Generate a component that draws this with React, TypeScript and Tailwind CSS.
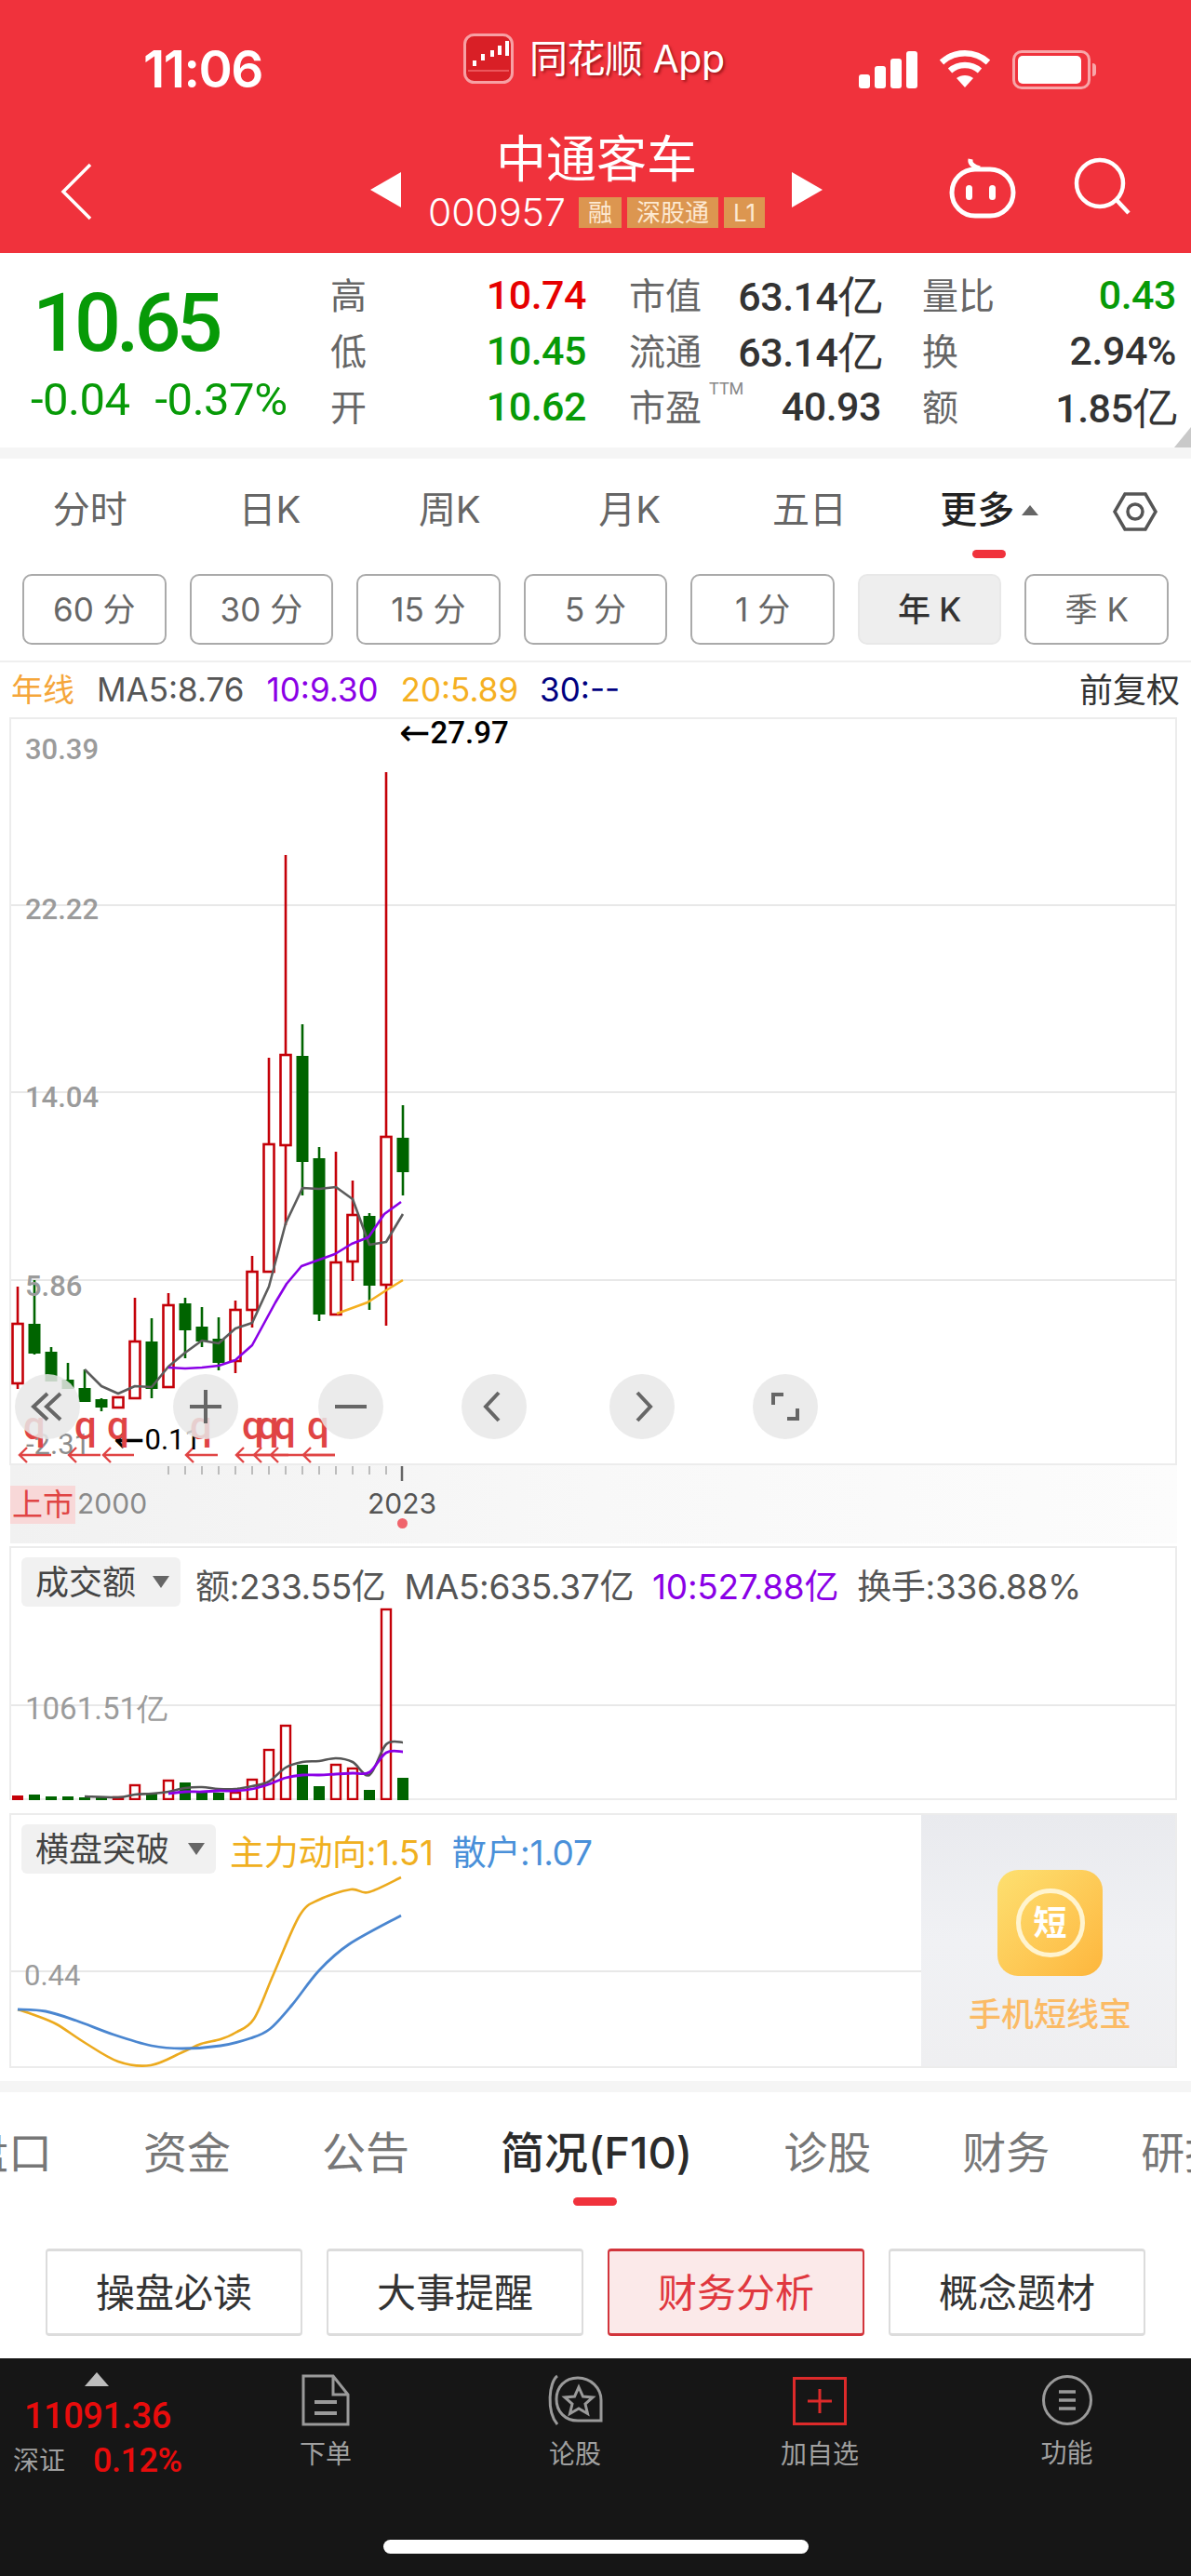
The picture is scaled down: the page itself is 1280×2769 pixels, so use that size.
import React from "react";

// x = 19 + 18 * i, all y values are page coordinates
const CANDLES: [string, number, number, number, number][] = [
  ["r", 1383, 1423, 1487, 1493],
  ["g", 1376, 1423, 1455, 1456],
  ["g", 1448, 1453, 1485, 1485],
  ["g", 1465, 1483, 1493, 1493],
  ["g", 1472, 1492, 1507, 1507],
  ["g", 1503, 1504, 1513, 1517],
  ["r", 1502, 1502, 1513, 1513],
  ["r", 1395, 1442, 1503, 1503],
  ["g", 1417, 1442, 1493, 1503],
  ["r", 1390, 1403, 1491, 1491],
  ["g", 1395, 1401, 1430, 1460],
  ["g", 1405, 1426, 1442, 1448],
  ["g", 1416, 1439, 1465, 1473],
  ["r", 1398, 1408, 1463, 1476],
  ["r", 1350, 1367, 1408, 1427],
  ["r", 1137, 1230, 1367, 1367],
  ["r", 919, 1134, 1231, 1317],
  ["g", 1101, 1135, 1249, 1285],
  ["g", 1233, 1245, 1413, 1420],
  ["r", 1238, 1357, 1413, 1413],
  ["r", 1269, 1306, 1356, 1377],
  ["g", 1304, 1307, 1382, 1408],
  ["r", 830, 1222, 1381, 1425],
  ["g", 1188, 1223, 1260, 1285],
];

const MA5 = "91,1472 109,1490 127,1498 145,1490 163,1491 181,1469 199,1454 217,1441 235,1444 253,1428 271,1422 289,1383 307,1315 325,1277 343,1278 361,1276 379,1289 397,1338 415,1335 433,1305";
const MA10 = "181,1470 199,1471 217,1470 235,1468 253,1462 271,1446 296,1400 308,1380 324,1361 360,1348 378,1337 396,1330 413,1305 431,1292";
const MA20 = "362,1412 395,1400 415,1387 433,1376";

const VOLS = [1930, 1929, 1931, 1931, 1932, 1932, 1932, 1919, 1928, 1914, 1916, 1927, 1927, 1927, 1913, 1881, 1855, 1897, 1920, 1897, 1901, 1924, 1730, 1911];
const VOL_MA5 = "91,1931 127,1932 145,1929 163,1928 181,1926 199,1922 217,1921 235,1923 253,1923 271,1920 289,1915 307,1900 325,1894 343,1893 361,1890 379,1894 397,1908 415,1875 433,1873";
const VOL_MA10 = "181,1928 199,1926 217,1926 235,1925 253,1925 271,1923 289,1918 307,1911 325,1908 343,1908 361,1907 379,1906 397,1905 415,1884 433,1883";

const ZLDX = "19,2160 37,2166 61,2176 90,2195 127,2216 162,2220 196,2206 216,2197 237,2192 253,2185 273,2170 294,2122 322,2059 343,2042 377,2031 396,2034 431,2018";
const SH = "19,2160 49,2162 82,2172 122,2187 163,2199 196,2202 237,2199 269,2191 290,2181 314,2155 343,2118 375,2090 431,2059";

const Q_X = [37, 92, 127, 216, 272, 288, 306, 342];
const ARROWS: [number, number][] = [[20, 55], [73, 108], [110, 144], [199, 234], [253, 360], [272, 290], [290, 310], [325, 360]];

const TABS = ["分时", "日K", "周K", "月K", "五日"];
const PERIODS = ["60 分", "30 分", "15 分", "5 分", "1 分", "年 K", "季 K"];
const LOWER_TABS = ["盘口", "资金", "公告", "简况(F10)", "诊股", "财务", "研报"];
const SHORTCUTS = ["操盘必读", "大事提醒", "财务分析", "概念题材"];

// catmull-rom through the sampled points, the indicator curves are smooth
function smooth(points: string) {
  const p = points.split(" ").map((s) => s.split(",").map(Number));
  let d = `M${p[0][0]} ${p[0][1]}`;
  for (let i = 0; i < p.length - 1; i++) {
    const a = p[Math.max(i - 1, 0)];
    const b = p[i];
    const c = p[i + 1];
    const e = p[Math.min(i + 2, p.length - 1)];
    d += `C${b[0] + (c[0] - a[0]) / 6} ${b[1] + (c[1] - a[1]) / 6} ${c[0] - (e[0] - b[0]) / 6} ${c[1] - (e[1] - b[1]) / 6} ${c[0]} ${c[1]}`;
  }
  return d;
}

function StatColumn({ rows, width }: { rows: [string, string, string][]; width: string }) {
  return (
    <div className={`flex flex-col ${width}`}>
      {rows.map(([label, value, color]) => (
        <div key={label} className="flex h-[60px] items-center justify-between">
          <span className="relative text-[39px] leading-none text-[#666]">
            {label}
            {label === "市盈" && (
              <span className="absolute left-[86px] top-[-9px] font-['Roboto'] text-[18px] text-[#888]">TTM</span>
            )}
          </span>
          <span className={`font-['Roboto'] text-[43px] font-medium tracking-[-0.5px] leading-none ${color}`}>
            {value.endsWith("亿") ? (
              <>
                {value.slice(0, -1)}
                <span className="text-[47px]">亿</span>
              </>
            ) : (
              value
            )}
          </span>
        </div>
      ))}
    </div>
  );
}

function Dropdown({ label, width }: { label: string; width: string }) {
  return (
    <div className={`flex h-[53px] items-center justify-between rounded-md bg-[#f1f1f1] pl-[15px] pr-3 text-[36px] text-[#444] ${width}`}>
      <span>{label}</span>
      <span className="h-0 w-0 border-x-[9px] border-t-[13px] border-x-transparent border-t-[#666]" />
    </div>
  );
}

function RoundButton({ left, children }: { left: string; children: React.ReactNode }) {
  return (
    <div className={`absolute top-[706px] flex h-[70px] w-[70px] items-center justify-center rounded-full bg-[#e8e8e8]/85 ${left}`}>
      <svg width="40" height="40" viewBox="0 0 40 40" fill="none" stroke="#666" strokeWidth="4">
        {children}
      </svg>
    </div>
  );
}

function NavLabel({ children }: { children: React.ReactNode }) {
  return <span className="mt-[16px] text-[28px] leading-none text-[#a0a0a0]">{children}</span>;
}

export default function App() {
  return (
    <div className="h-[2769px] w-[1280px] overflow-hidden bg-white font-['Inter','Noto_Sans_CJK_SC',sans-serif]">
      {/* red header */}
      <div className="h-[272px] bg-[#f0323c] text-white">
        <div className="flex h-[145px] items-start">
          <span className="ml-[154px] mt-[47px] w-[135px] font-['Inter'] text-[55px] font-semibold leading-none tracking-[-1.5px]">11:06</span>
          <div className="ml-[209px] mt-[36px] flex items-center gap-[17px]">
            <svg width="54" height="54" viewBox="0 0 54 54">
              <rect x="1.5" y="1.5" width="51" height="51" rx="10" fill="#d91f26" stroke="#f7a0a4" strokeWidth="3" />
              <path d="M5 40h44" stroke="#f26a6e" strokeWidth="1.5" />
              <path d="M10 29h4v6h-4zM19 22h4v7h-4zM29 18h4v7h-4zM37 13h4v10h-4zM45 8h4v16h-4z" fill="#fff" />
            </svg>
            <span className="w-[212px] whitespace-nowrap text-[41px] leading-none tracking-[-0.5px] [text-shadow:2px_2px_3px_rgba(90,0,0,0.55)]">同花顺 App</span>
          </div>
          <div className="ml-[142px] mt-[55px] flex items-end gap-[5px]">
            {["h-[15px]", "h-[24px]", "h-[32px]", "h-[40px]"].map((h) => (
              <span key={h} className={`w-[12px] rounded-[3px] bg-white ${h}`} />
            ))}
          </div>
          <svg className="ml-[22px] mt-[53px]" width="58" height="42" viewBox="0 0 58 42" fill="none" stroke="#fff" strokeWidth="6.5">
            <path d="M4 14C18 1 40 1 54 14" />
            <path d="M13 23C22 15 36 15 45 23" />
            <path d="M29 41L20 31C25 27 33 27 38 31Z" fill="#fff" stroke="none" />
          </svg>
          <div className="ml-[22px] mt-[54px] flex items-center">
            <div className="flex h-[42px] w-[84px] items-center rounded-[10px] border-[3px] border-[#f8a6a9] p-[3px]">
              <div className="h-full w-[68px] rounded-[5px] bg-white" />
            </div>
            <div className="ml-[2px] h-[14px] w-[4px] rounded-r-full bg-[#f8a6a9]" />
          </div>
        </div>
        <div className="grid h-[127px] grid-cols-[398px_486px_1fr]">
          <div className="pl-[64px] pt-[30px]">
            <svg width="36" height="62" viewBox="0 0 36 62" fill="none" stroke="#fff" strokeWidth="3.5">
              <path d="M33 2L4 31l29 29" />
            </svg>
          </div>
          <div className="flex items-start justify-between">
            <span className="mt-[40px] h-0 w-0 border-y-[19px] border-r-[33px] border-y-transparent border-r-white" />
            <div className="flex flex-col items-center">
              <span className="text-[54px] leading-none">中通客车</span>
              <div className="mt-[9px] flex items-center">
                <span className="mr-[14px] text-[41px] font-light leading-none">000957</span>
                {["融", "深股通", "L1"].map((b) => (
                  <span key={b} className="mr-[6px] flex h-[33px] items-center bg-[#dc9650] px-[10px] text-[26px] leading-none text-[#fde9d2] last:mr-0">
                    {b}
                  </span>
                ))}
              </div>
            </div>
            <span className="mt-[40px] h-0 w-0 border-y-[19px] border-l-[33px] border-y-transparent border-l-white" />
          </div>
          <div className="flex items-start justify-end gap-[62px] pr-[64px] pt-[24px]">
            <svg width="72" height="66" viewBox="0 0 72 66" fill="none" stroke="#fff" strokeWidth="5">
              <path d="M23 2c-1 5 3 8 10 10" />
              <rect x="3" y="13" width="66" height="50" rx="25" />
              <rect x="18" y="30" width="7" height="16" rx="3.5" fill="#fff" stroke="none" />
              <rect x="43" y="30" width="7" height="16" rx="3.5" fill="#fff" stroke="none" />
            </svg>
            <svg width="62" height="62" viewBox="0 0 62 62" fill="none" stroke="#fff" strokeWidth="4.5">
              <circle cx="28" cy="28" r="25" />
              <path d="M46 46l13 14" />
            </svg>
          </div>
        </div>
      </div>

      {/* quote summary */}
      <div className="relative flex h-[209px] bg-white pt-[15px]">
        <div className="flex w-[355px] flex-col pl-[33px]">
          <span className="mt-[16px] ml-[2px] font-['Roboto'] text-[88px] font-medium leading-none tracking-[-5px] text-[#079a07]">10.65</span>
          <div className="mt-[14px] flex gap-[27px] whitespace-nowrap font-['Roboto'] text-[49px] leading-none tracking-[-0.5px] text-[#079a07]">
            <span>-0.04</span>
            <span>-0.37%</span>
          </div>
        </div>
        <StatColumn
          width="w-[275px]"
          rows={[
            ["高", "10.74", "text-[#e60000]"],
            ["低", "10.45", "text-[#079a07]"],
            ["开", "10.62", "text-[#079a07]"],
          ]}
        />
        <div className="w-[46px]" />
        <StatColumn
          width="w-[271px]"
          rows={[
            ["市值", "63.14亿", "text-[#333]"],
            ["流通", "63.14亿", "text-[#333]"],
            ["市盈", "40.93", "text-[#333]"],
          ]}
        />
        <div className="w-[44px]" />
        <StatColumn
          width="w-[273px]"
          rows={[
            ["量比", "0.43", "text-[#079a07]"],
            ["换", "2.94%", "text-[#333]"],
            ["额", "1.85亿", "text-[#333]"],
          ]}
        />
        <span className="absolute bottom-0 right-0 h-0 w-0 border-b-[22px] border-l-[18px] border-b-[#c9c9c9] border-l-transparent" />
      </div>
      <div className="h-[12px] bg-[#f5f5f5]" />

      {/* period tabs */}
      <div className="flex h-[124px] items-start pt-[35px]">
        <div className="grid w-[1160px] grid-cols-6">
          {TABS.map((t) => (
            <span key={t} className="text-center text-[40px] leading-[40px] text-[#666]">
              {t}
            </span>
          ))}
          <div className="relative flex items-center justify-center gap-[8px]">
            <span className="text-[40px] font-medium leading-[40px] text-[#222]">更多</span>
            <span className="h-0 w-0 border-x-[9px] border-b-[11px] border-x-transparent border-b-[#666]" />
            <span className="absolute left-[78px] top-[63px] h-[9px] w-[36px] rounded-full bg-[#f0323c]" />
          </div>
        </div>
        <svg className="ml-[35px]" width="50" height="44" viewBox="0 0 50 44" fill="none" stroke="#555" strokeWidth="3.5">
          <path d="M14 3h22l11 19-11 19H14L3 22z" />
          <circle cx="25" cy="22" r="8" />
        </svg>
      </div>
      <div className="flex h-[76px] gap-[25px] px-[24px]">
        {PERIODS.map((p) => (
          <div
            key={p}
            className={`flex w-[155px] items-center justify-center rounded-[10px] border-2 text-[35px] ${p === "年 K" ? "border-[#e8e8e8] bg-[#eeeeee] font-medium text-[#333]" : "border-[#aaa] text-[#666]"}`}
          >
            {p}
          </div>
        ))}
      </div>
      <div className="mt-[17px] h-[2px] bg-[#efefef]" />

      {/* MA legend */}
      <div className="flex h-[59px] items-center px-[12px] text-[35px] leading-none">
        <span className="text-[34px] text-[#f5a63a]">年线</span>
        <span className="ml-[24px] text-[#555]">MA5:8.76</span>
        <span className="ml-[24px] text-[#8a00e6]">10:9.30</span>
        <span className="ml-[24px] text-[#f5b021]">20:5.89</span>
        <span className="ml-[23px] text-[#000080]">30:--</span>
        <span className="ml-auto text-[36px] text-[#333]">前复权</span>
      </div>

      {/* K line chart */}
      <div className="relative ml-[10px] h-[804px] w-[1255px] overflow-hidden outline-2 -outline-offset-2 outline-[#ececec]">
        <svg className="absolute inset-0" width="1255" height="804" viewBox="10 771 1255 804" fill="none">
          {[973, 1174, 1376].map((y) => (
            <path key={y} d={`M12 ${y}H1264`} stroke="#e8e8e8" strokeWidth="2" />
          ))}
          {CANDLES.map(([kind, hi, top, bottom, lo], i) => {
            const x = 19 + 18 * i;
            const color = kind === "r" ? "#c40008" : "#006400";
            return (
              <g key={i}>
                <path d={`M${x} ${hi}V${lo}`} stroke={color} strokeWidth="2.6" />
                {kind === "r" ? (
                  <rect x={x - 5.5} y={top} width="11" height={bottom - top} fill="#fff" stroke={color} strokeWidth="2.6" />
                ) : (
                  <rect x={x - 6.5} y={top} width="13" height={bottom - top} fill={color} />
                )}
              </g>
            );
          })}
          <polyline points={MA5} stroke="#5c5c5c" strokeWidth="2.6" strokeLinejoin="round" />
          <polyline points={MA10} stroke="#8a00e6" strokeWidth="2.6" strokeLinejoin="round" />
          <polyline points={MA20} stroke="#f5b021" strokeWidth="2.6" strokeLinejoin="round" />
          {ARROWS.map(([a, b]) => (
            <path key={a} d={`M${b} 1564H${a + 1}M${a + 9} 1556l-8 8 8 8`} stroke="#e04444" strokeWidth="2.4" />
          ))}
        </svg>

        {[
          ["30.39", "top-[19px]"],
          ["22.22", "top-[191px]"],
          ["14.04", "top-[393px]"],
          ["5.86", "top-[596px]"],
        ].map(([v, top]) => (
          <span key={v} className={`absolute left-[17px] font-['Roboto'] text-[31px] font-medium leading-[31px] text-[#9b9b9b] ${top}`}>
            {v}
          </span>
        ))}
        <span className="absolute left-[419px] top-0 flex items-center font-['Roboto'] text-[33px] font-medium leading-[33px] text-black">
          <span className="font-['DejaVu_Sans'] text-[40px] font-normal leading-[33px]">←</span>27.97
        </span>
        <span className="absolute left-[18px] top-[766px] font-['Roboto'] text-[31px] leading-[31px] text-[#8c8c8c]">-2.31</span>
        <span className="absolute left-[112px] top-[761px] flex items-center font-['Roboto'] text-[31px] leading-[31px] text-black">
          <span className="font-['DejaVu_Sans'] text-[40px] leading-[31px]">←</span>0.11
        </span>
        {Q_X.map((x, i) => (
          <span
            key={i}
            className="absolute top-[741px] font-['Roboto'] text-[42px] font-medium leading-[42px] text-[#e04444]"
            style={{ left: x - 22 }}
          >
            q
          </span>
        ))}

        <RoundButton left="left-[6px]">
          <path d="M20 6L5 20l15 14M34 6L19 20l15 14" />
        </RoundButton>
        <RoundButton left="left-[176px]">
          <path d="M20 2v36M3 20h34" />
        </RoundButton>
        <RoundButton left="left-[332px]">
          <path d="M3 20h34" />
        </RoundButton>
        <RoundButton left="left-[486px]">
          <path d="M25 5L11 20l14 15" />
        </RoundButton>
        <RoundButton left="left-[645px]">
          <path d="M15 5l14 15-14 15" />
        </RoundButton>
        <RoundButton left="left-[799px]">
          <path d="M7 18V7h11M33 22v11H22" />
        </RoundButton>
      </div>

      {/* time axis */}
      <div className="relative ml-[11px] h-[84px] w-[1254px] bg-gradient-to-r from-[#f1f1f1] via-[#f8f8f8] to-[#fcfcfc]">
        <svg className="absolute inset-0" width="1254" height="20" viewBox="11 1575 1254 20" fill="none">
          {CANDLES.slice(9, 23).map((_, i) => (
            <path key={i} d={`M${181 + 18 * i} 1576v9`} stroke="#bcbcbc" strokeWidth="2" />
          ))}
          <path d="M432 1576v16" stroke="#666" strokeWidth="2.5" />
        </svg>
        <div className="flex items-start pt-[22px]">
          <span className="flex h-[41px] w-[70px] items-center justify-center bg-[#f8d8d8] text-[33px] leading-none text-[#e04444]">上市</span>
          <span className="ml-[2px] mt-[3px] w-[73px] text-[30px] leading-[33px] text-[#8a8a8a]">2000</span>
          <div className="ml-[239px] mt-[3px] flex flex-col items-center">
            <span className="text-[30px] leading-[33px] text-[#555]">2023</span>
            <span className="mt-[-1px] h-[11px] w-[11px] rounded-full bg-[#f0646c]" />
          </div>
        </div>
      </div>
      <div className="h-[3px]" />

      {/* volume */}
      <div className="relative ml-[10px] h-[273px] w-[1255px] overflow-hidden outline-2 -outline-offset-2 outline-[#ececec]">
        <svg className="absolute inset-0" width="1255" height="273" viewBox="10 1662 1255 273" fill="none">
          <path d="M12 1833H1264" stroke="#e8e8e8" strokeWidth="2" />
          {VOLS.map((top, i) => {
            const x = 19 + 18 * i;
            const kind = CANDLES[i][0];
            if (i === 0) return <rect key={i} x={x - 6} y={top} width="12" height={1935 - top} fill="#c40008" />;
            return kind === "r" ? (
              <rect key={i} x={x - 5} y={top} width="10" height={1934 - top} fill="#fff" stroke="#c40008" strokeWidth="2.4" />
            ) : (
              <rect key={i} x={x - 6} y={top} width="12" height={1935 - top} fill="#006400" />
            );
          })}
          <path d={smooth(VOL_MA5)} stroke="#555" strokeWidth="2.6" />
          <path d={smooth(VOL_MA10)} stroke="#8a00e6" strokeWidth="2.8" />
        </svg>
        <span className="absolute left-[17px] top-[158px] font-['Roboto'] text-[33px] leading-[33px] text-[#9b9b9b]">1061.51亿</span>
        <div className="relative flex items-center pl-[13px] pt-[12px]">
          <Dropdown label="成交额" width="w-[171px]" />
          <div className="ml-[16px] mt-[9px] flex gap-[20px] whitespace-nowrap text-[37px] leading-none tracking-[-0.3px] text-[#555]">
            <span>额:233.55亿</span>
            <span>MA5:635.37亿</span>
            <span className="text-[#8a00e6]">10:527.88亿</span>
            <span>换手:336.88%</span>
          </div>
        </div>
      </div>
      <div className="h-[14px]" />

      {/* indicator */}
      <div className="relative ml-[10px] flex h-[274px] w-[1255px] overflow-hidden outline-2 -outline-offset-2 outline-[#ececec]">
        <div className="relative w-[980px]">
          <svg className="absolute inset-0" width="980" height="274" viewBox="10 1949 980 274" fill="none">
            <path d="M12 2119H990" stroke="#e8e8e8" strokeWidth="2" />
            <path d={smooth(ZLDX)} stroke="#ecaa1e" strokeWidth="2.6" />
            <path d={smooth(SH)} stroke="#4a86d0" strokeWidth="2.8" />
          </svg>
          <span className="absolute left-[16px] top-[159px] font-['Roboto'] text-[31px] leading-[31px] text-[#9b9b9b]">0.44</span>
          <div className="relative flex items-center pl-[13px] pt-[12px]">
            <Dropdown label="横盘突破" width="w-[209px]" />
            <span className="ml-[15px] mt-[7px] whitespace-nowrap text-[37px] leading-none tracking-[-0.3px] text-[#f0b020]">主力动向:1.51</span>
            <span className="ml-[20px] mt-[7px] whitespace-nowrap text-[37px] leading-none tracking-[-0.3px] text-[#4a90d9]">散户:1.07</span>
          </div>
        </div>
        <div className="flex w-[275px] flex-col items-center bg-gradient-to-b from-[#e9eaee] via-[#f0f1f4] to-[#efeff1] pl-[2px] pt-[61px]">
          <div className="flex h-[114px] w-[113px] items-center justify-center rounded-[22px] bg-gradient-to-br from-[#fde070] to-[#fdb63c]">
            <div className="flex h-[74px] w-[74px] items-center justify-center rounded-full border-[5px] border-[#fff4cf] text-[36px] font-bold leading-none text-white">短</div>
          </div>
          <span className="mt-[24px] text-[35px] font-medium leading-none text-[#fbbb66]">手机短线宝</span>
        </div>
      </div>
      <div className="h-[14px]" />
      <div className="h-[12px] bg-[#f5f5f5]" />

      {/* F10 tabs */}
      <div className="relative flex h-[168px] items-start overflow-hidden pt-[42px]">
        <div className="ml-[-38px] flex items-start gap-[98px]">
          {LOWER_TABS.map((t) => (
            <span key={t} className={`whitespace-nowrap text-[47px] leading-[46px] ${t === "简况(F10)" ? "font-medium text-[#2b2b2b]" : "text-[#777]"}`}>
              {t}
            </span>
          ))}
        </div>
        <span className="absolute left-[616px] top-[113px] h-[9px] w-[47px] rounded-full bg-[#f0323c]" />
      </div>
      <div className="flex h-[94px] gap-[26px] pl-[49px]">
        {SHORTCUTS.map((s) => (
          <div
            key={s}
            className={`flex w-[276px] items-center justify-center rounded-[4px] border-x-2 border-y-[3px] text-[42px] ${
              s === "财务分析" ? "border-[#d2353c] bg-[#fbe9e9] text-[#e0383f]" : "border-[#dcdcdc] bg-white text-[#333]"
            }`}
          >
            {s}
          </div>
        ))}
      </div>
      <div className="h-[24px]" />

      {/* bottom bar */}
      <div className="flex h-[234px] flex-col bg-[#161616]">
        <div className="flex h-[195px]">
          <div className="relative flex w-[215px] flex-col pl-[14px] pt-[15px]">
            <span className="ml-[77px] h-0 w-0 border-x-[13px] border-b-[15px] border-x-transparent border-b-[#bdbdbd]" />
            <span className="ml-[12px] mt-[13px] font-['Roboto'] text-[38px] font-medium leading-none tracking-[-0.5px] text-[#e80c0c]">11091.36</span>
            <div className="mt-[11px] flex items-center gap-[30px]">
              <span className="text-[28px] leading-none text-[#a0a0a0]">深证</span>
              <span className="font-['Roboto'] text-[36px] font-medium leading-none tracking-[-0.5px] text-[#e80c0c]">0.12%</span>
            </div>
          </div>
          <div className="flex w-[270px] flex-col items-center pt-[17px]">
            <svg width="52" height="56" viewBox="0 0 52 56" fill="none" stroke="#9a9a9a" strokeWidth="3">
              <path d="M2 2h32l16 20v32H2zM34 2v20h16" />
              <path d="M14 30h24M14 42h24" strokeWidth="4" />
            </svg>
            <NavLabel>下单</NavLabel>
          </div>
          <div className="flex w-[270px] flex-col items-center pr-[4px] pt-[17px]">
            <svg width="60" height="56" viewBox="0 0 60 56" fill="none" stroke="#9a9a9a" strokeWidth="3">
              <path d="M11 2C2 8-1 40 11 54" />
              <path d="M33 4c14 0 25 11 25 24v22H33C19 50 10 40 10 27S19 4 33 4z" />
              <path d="M34 14l4.500 10 10.500 1-8 7 2.500 10.500-9.500-5.500-9.500 5.500 2.500-10.500-8-7 10.500-1z" />
            </svg>
            <NavLabel>论股</NavLabel>
          </div>
          <div className="flex w-[252px] flex-col items-center pt-[20px]">
            <svg width="58" height="52" viewBox="0 0 58 52" fill="none" stroke="#dd2a2a" strokeWidth="3">
              <rect x="1.500" y="1.500" width="55" height="49" />
              <path d="M29 13v26M16 26h26" />
            </svg>
            <span className="mt-[17px] text-[28px] leading-none text-[#a0a0a0]">加自选</span>
          </div>
          <div className="flex w-[273px] flex-col items-center pl-[6px] pt-[18px]">
            <svg width="54" height="54" viewBox="0 0 54 54" fill="none" stroke="#9a9a9a" strokeWidth="3">
              <circle cx="27" cy="27" r="25.500" />
              <path d="M18 18h18M18 27h18M18 36h18" strokeWidth="3.500" />
            </svg>
            <NavLabel>功能</NavLabel>
          </div>
        </div>
        <div className="ml-[412px] h-[15px] w-[457px] rounded-full bg-white" />
      </div>
    </div>
  );
}
